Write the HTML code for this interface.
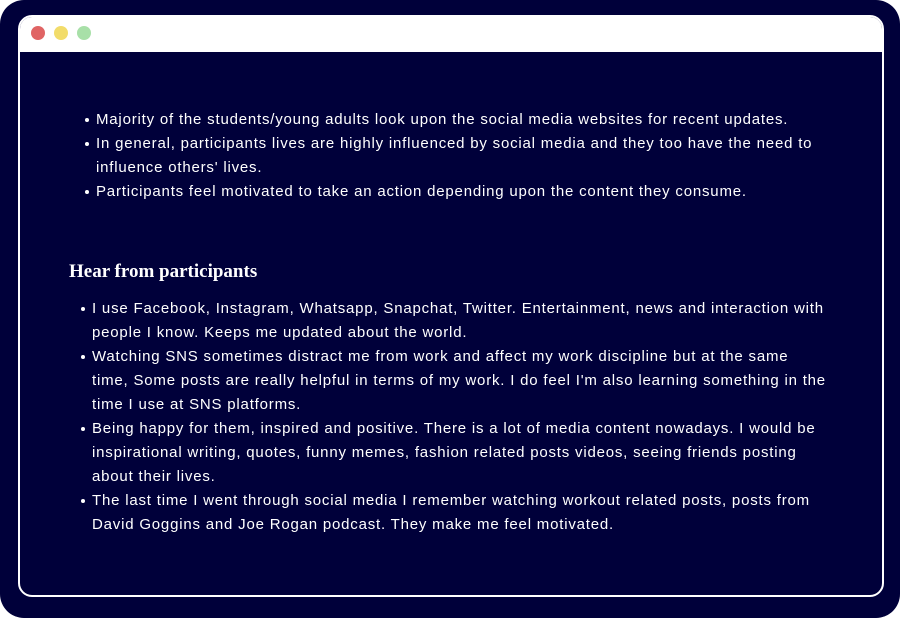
<!DOCTYPE html>
<html><head><style>
html,body{margin:0;padding:0;background:#fff;}
.outer{position:absolute;left:0;top:0;width:900px;height:618px;background:#00003a;border-radius:24px;}
.frame{position:absolute;left:18px;top:15px;width:862px;height:578px;border:2px solid #fff;border-radius:14px;overflow:hidden;background:#00003a;}
.bar{position:absolute;left:0;top:0;right:0;height:35px;background:#fff;}
.dot{position:absolute;top:9px;width:14px;height:14px;border-radius:50%;}
.t{position:absolute;color:#fff;font-family:"Liberation Sans",sans-serif;font-size:15px;line-height:24px;letter-spacing:0.8px;white-space:nowrap;}
ul{margin:0;padding:0;list-style:none;}
li{position:relative;}
li:before{content:"";position:absolute;left:-11px;top:10px;width:4px;height:4px;border-radius:50%;background:#fff;}
h3{position:absolute;left:49px;top:244px;margin:0;color:#fff;font-family:"Liberation Serif",serif;font-weight:bold;font-size:19px;}
</style></head><body>
<div class="outer"></div>
<div class="frame">
<div class="bar">
<div class="dot" style="left:11px;background:#e06464"></div>
<div class="dot" style="left:34px;background:#f2dc6a"></div>
<div class="dot" style="left:57px;background:#a8e0a8"></div>
</div>
<div class="t" style="left:76px;top:91px;">
<ul>
<li>Majority of the students/young adults look upon the social media websites for recent updates.</li>
<li>In general, participants lives are highly influenced by social media and they too have the need to<br>influence others' lives.</li>
<li>Participants feel motivated to take an action depending upon the content they consume.</li>
</ul></div>
<h3>Hear from participants</h3>
<div class="t" style="left:72px;top:280px;">
<ul>
<li>I use Facebook, Instagram, Whatsapp, Snapchat, Twitter. Entertainment, news and interaction with<br>people I know. Keeps me updated about the world.</li>
<li>Watching SNS sometimes distract me from work and affect my work discipline but at the same<br>time, Some posts are really helpful in terms of my work. I do feel I'm also learning something in the<br>time I use at SNS platforms.</li>
<li>Being happy for them, inspired and positive. There is a lot of media content nowadays. I would be<br>inspirational writing, quotes, funny memes, fashion related posts videos, seeing friends posting<br>about their lives.</li>
<li>The last time I went through social media I remember watching workout related posts, posts from<br>David Goggins and Joe Rogan podcast. They make me feel motivated.</li>
</ul></div>
</div>
</body></html>
